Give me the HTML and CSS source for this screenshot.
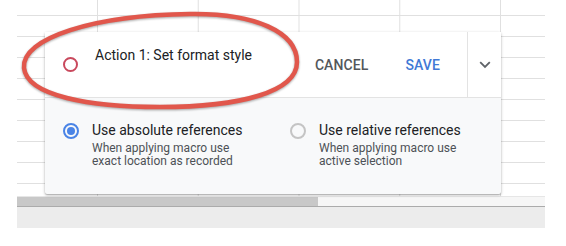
FILE: index.html
```html
<!DOCTYPE html>
<html lang="en">

<head>
  <meta charset="UTF-8" />
  <meta name="viewport" content="width=device-width, initial-scale=1.0" />
  <title>Record macro</title>
  <link rel="stylesheet" href="styles.css">
</head>

<body>
  <div class="screen">
    <div class="sheet">
      <div class="grid"></div>
      <div class="hscroll">
        <div class="hscroll_thumb"></div>
      </div>
      <div class="tab_bar"></div>

      <!-- Macro recorder popup -->
      <div class="macro_panel">
        <div class="panel_head">
          <span class="rec_dot"></span>
          <div class="action_title">Action 1: Set format style</div>
          <div class="panel_actions">
            <button class="text_btn">CANCEL</button>
            <button class="text_btn save_btn">SAVE</button>
          </div>
          <button class="expand_btn" aria-label="Expand">
            <svg width="12" height="8" viewBox="0 0 12 8">
              <path d="M1.2 1.2 L6 6 L10.8 1.2" fill="none" stroke="#5f6368" stroke-width="1.8" />
            </svg>
          </button>
        </div>

        <div class="panel_options">
          <label class="option">
            <span class="radio radio_checked"></span>
            <span class="option_text">
              <span class="option_title">Use absolute references</span>
              <span class="option_desc">When applying macro use<br>exact location as recorded</span>
            </span>
          </label>
          <label class="option">
            <span class="radio"></span>
            <span class="option_text">
              <span class="option_title">Use relative references</span>
              <span class="option_desc">When applying macro use<br>active selection</span>
            </span>
          </label>
        </div>
      </div>
    </div>

    <!-- hand drawn highlight -->
    <svg class="annotation" width="566" height="246" viewBox="0 0 566 246">
      <path d="M 24 68 C 21 38, 95 15, 190 14 C 255 13, 297 32, 297 62 C 297 92, 240 107, 160 107 C 90 107, 27 96, 24 68 Z"
        fill="none" stroke="#e1574c" stroke-width="4.5" />
    </svg>
  </div>
</body>

</html>
```

FILE: styles.css
```css
body {
  margin: 0;
  background-color: #fff;
  font-family: Roboto, 'Liberation Sans', Arial, sans-serif;
}

.screen {
  position: relative;
  width: 566px;
  height: 246px;
  overflow: hidden;
}

.sheet {
  position: relative;
  margin-left: 17px;
  width: 528px;
}

.grid {
  height: 196px;
  background-image:
    linear-gradient(to right, #e0e0e0 1px, transparent 1px),
    linear-gradient(to bottom, #e0e0e0 1px, transparent 1px);
  background-size: 100.75px 21px;
  background-position: 80px 15px;
}

.hscroll {
  height: 11px;
  box-sizing: border-box;
  border-top: 1px solid #e6e6e6;
  border-bottom: 1px solid #ababab;
  background-color: #f6f6f6;
}

.hscroll_thumb {
  width: 301px;
  height: 100%;
  background-color: #c8c8c8;
}

.tab_bar {
  height: 21px;
  background-color: #ececec;
}

.macro_panel {
  position: absolute;
  left: 28px;
  top: 32px;
  width: 456px;
  height: 162px;
  display: flex;
  flex-direction: column;
  background-color: #f8f9fa;
  border-radius: 2px;
  box-shadow: 0 1px 3px rgba(0, 0, 0, 0.3), 0 1px 1px rgba(0, 0, 0, 0.12);
}

.panel_head {
  display: flex;
  align-items: center;
  height: 65px;
  border-bottom: 1px solid #e3e3e3;
  background-color: #fff;
}

.rec_dot {
  width: 15px;
  height: 15px;
  margin-left: 18px;
  box-sizing: border-box;
  border: 2px solid #c9495d;
  border-radius: 50%;
  flex-shrink: 0;
}

.action_title {
  flex: 1;
  align-self: flex-start;
  margin-top: 13px;
  margin-left: 17px;
  font-size: 14px;
  line-height: 20px;
  color: #202124;
}

.panel_actions {
  display: flex;
  gap: 37px;
  margin-right: 27px;
}

.text_btn {
  padding: 0;
  border: 0;
  background: transparent;
  font-family: inherit;
  font-size: 14px;
  font-weight: 500;
  letter-spacing: 0.1px;
  color: #54575b;
}

.save_btn {
  color: #4179d6;
}

.expand_btn {
  display: flex;
  align-items: center;
  justify-content: center;
  align-self: stretch;
  width: 34px;
  padding: 0;
  border: 0;
  border-left: 1px solid #e3e3e3;
  background: transparent;
}

.panel_options {
  display: grid;
  grid-template-columns: 227px 1fr;
  padding: 23px 0 0 18px;
}

.option {
  display: flex;
  align-items: flex-start;
}

.radio {
  width: 16px;
  height: 16px;
  margin-top: 2px;
  margin-right: 13px;
  box-sizing: border-box;
  border: 2px solid #c4c4c4;
  border-radius: 50%;
  flex-shrink: 0;
  display: flex;
  align-items: center;
  justify-content: center;
}

.radio_checked {
  border-color: #4a84e6;
}

.radio_checked::after {
  content: '';
  width: 8px;
  height: 8px;
  border-radius: 50%;
  background-color: #4a84e6;
}

.option_text {
  display: flex;
  flex-direction: column;
}

.option_title {
  font-size: 14px;
  line-height: 18px;
  color: #202124;
}

.option_desc {
  margin-top: 2.5px;
  font-size: 12px;
  line-height: 13px;
  color: #4d5156;
}

.annotation {
  position: absolute;
  left: 0;
  top: 0;
  pointer-events: none;
  filter: drop-shadow(0 1.5px 1px rgba(0, 0, 0, 0.35));
}
```
